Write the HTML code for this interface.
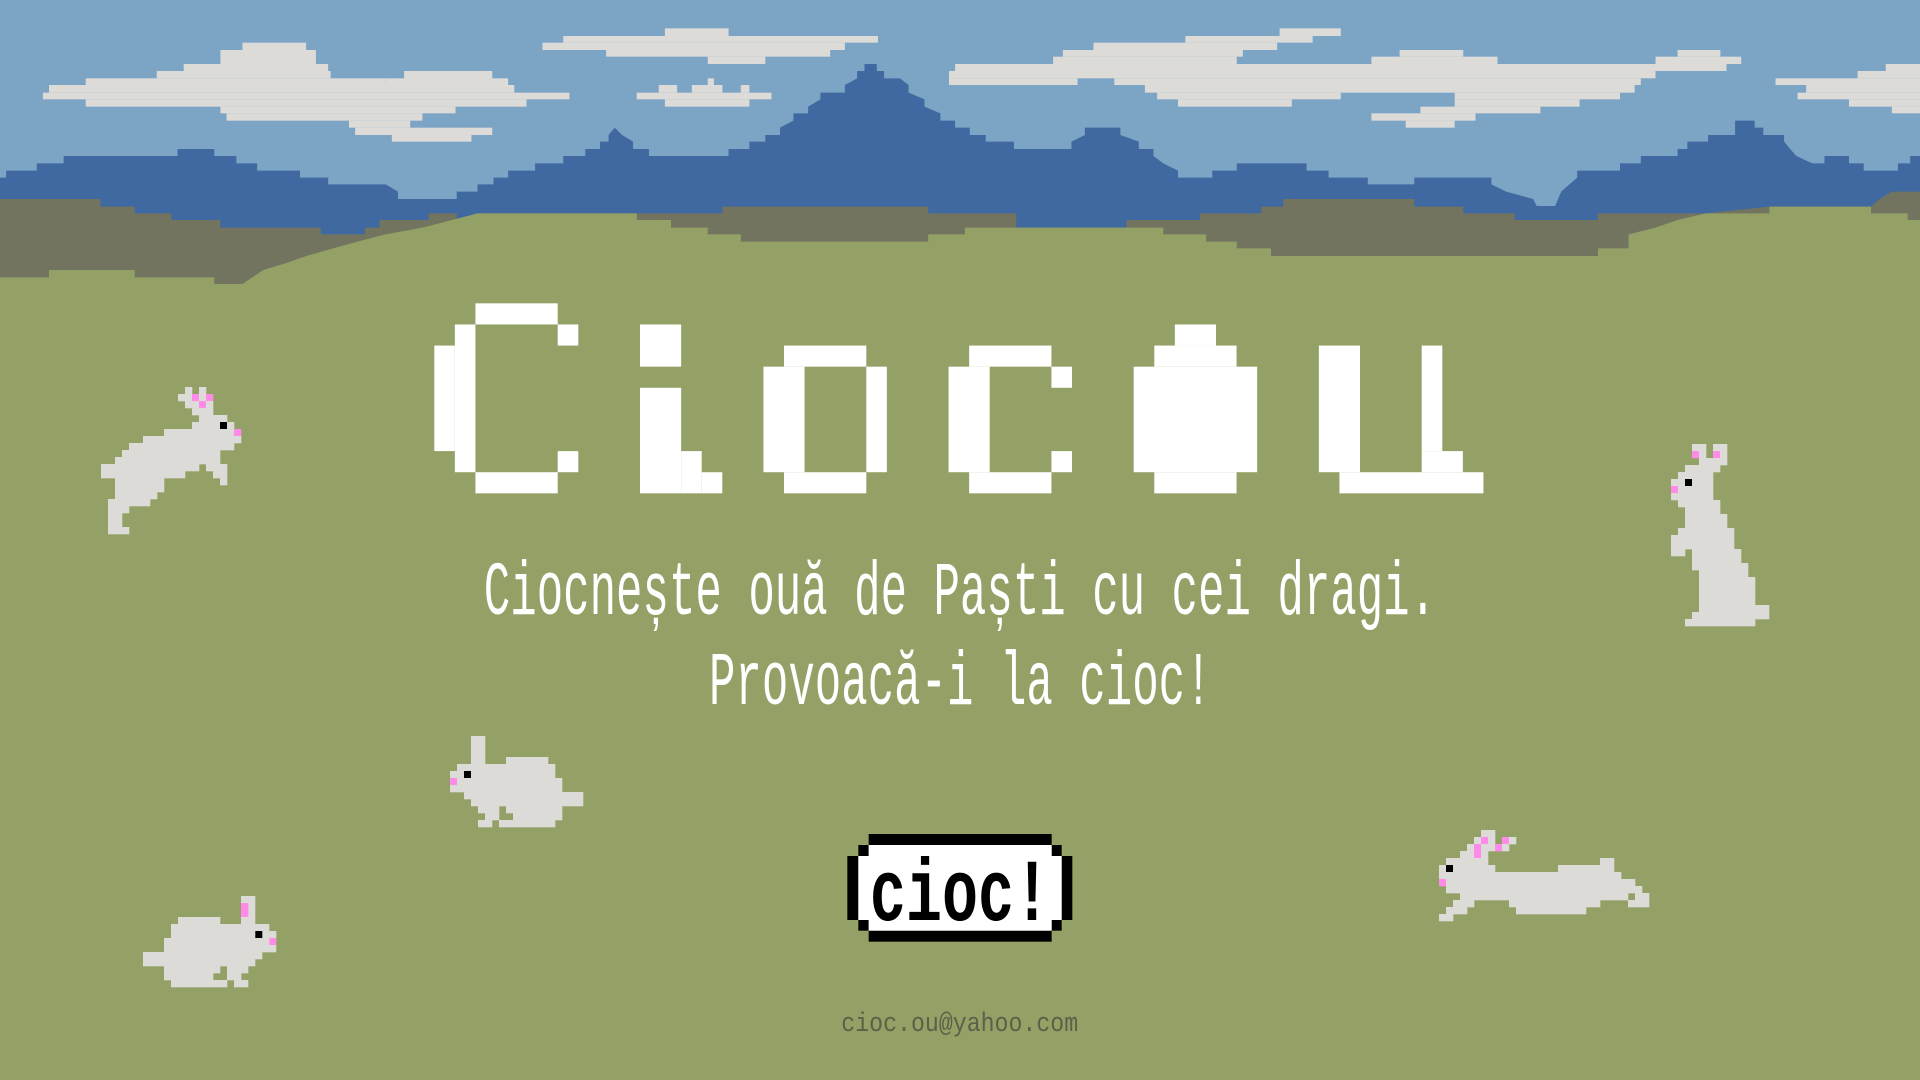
<!DOCTYPE html>
<html><head><meta charset="utf-8">
<style>
html,body{margin:0;padding:0;}
body{width:1920px;height:1080px;overflow:hidden;background:#93a066;position:relative;font-family:"Liberation Mono",monospace;}
svg{position:absolute;display:block;}
.line{position:absolute;left:0;width:1920px;text-align:center;color:#fff;font-size:76px;line-height:1;white-space:nowrap;}
.line span{display:inline-block;transform:scaleX(0.58);transform-origin:center;}
.mail{position:absolute;left:0;width:1920px;text-align:center;color:#5b6147;font-size:27px;}
.mail span{display:inline-block;transform:scaleX(0.86);}
</style></head><body>
<svg width="1920" height="300" viewBox="0 0 1568 900" preserveAspectRatio="none" style="left:0;top:0">
<rect x="0" y="0" width="1568" height="900" fill="#7ba4c5"/>
<g fill="#dcdbd8">
<rect x="198" y="128" width="52" height="22"/><rect x="180" y="150" width="78" height="42"/><rect x="150" y="192" width="118" height="21"/><rect x="128" y="213" width="142" height="22"/><rect x="70" y="235" width="245" height="20"/><rect x="330" y="213" width="72" height="42"/><rect x="315" y="235" width="100" height="20"/><rect x="40" y="255" width="380" height="23"/><rect x="35" y="278" width="430" height="20"/><rect x="70" y="298" width="360" height="22"/><rect x="180" y="320" width="192" height="20"/><rect x="185" y="340" width="160" height="22"/><rect x="285" y="362" width="50" height="21"/><rect x="290" y="383" width="112" height="22"/><rect x="320" y="405" width="65" height="20"/>
<rect x="543" y="85" width="52" height="23"/><rect x="460" y="108" width="257" height="20"/><rect x="443" y="128" width="247" height="22"/><rect x="495" y="150" width="183" height="20"/><rect x="578" y="170" width="47" height="22"/>
<rect x="578" y="235" width="5" height="20"/><rect x="538" y="255" width="15" height="23"/><rect x="565" y="255" width="25" height="23"/><rect x="605" y="255" width="7" height="23"/><rect x="520" y="278" width="110" height="20"/><rect x="543" y="298" width="69" height="22"/>
<rect x="1045" y="85" width="50" height="23"/><rect x="968" y="108" width="104" height="20"/><rect x="893" y="128" width="150" height="22"/><rect x="868" y="150" width="147" height="20"/><rect x="860" y="170" width="150" height="22"/><rect x="1143" y="150" width="52" height="20"/><rect x="1120" y="170" width="103" height="22"/><rect x="1370" y="150" width="35" height="20"/><rect x="1352" y="170" width="70" height="22"/><rect x="780" y="192" width="630" height="21"/><rect x="775" y="213" width="577" height="22"/><rect x="775" y="235" width="105" height="20"/><rect x="910" y="235" width="430" height="20"/><rect x="935" y="255" width="400" height="23"/><rect x="945" y="278" width="150" height="20"/><rect x="1188" y="278" width="135" height="20"/><rect x="962" y="298" width="93" height="22"/><rect x="1188" y="298" width="102" height="22"/><rect x="1160" y="320" width="98" height="20"/><rect x="1120" y="340" width="85" height="22"/><rect x="1148" y="362" width="40" height="21"/>
<rect x="1540" y="192" width="28" height="21"/><rect x="1517" y="213" width="51" height="22"/><rect x="1450" y="235" width="118" height="20"/><rect x="1475" y="255" width="93" height="23"/><rect x="1468" y="278" width="100" height="20"/><rect x="1510" y="298" width="58" height="22"/><rect x="1545" y="320" width="23" height="20"/>
</g>
<polygon fill="#3f69a0" points="0,533 5,533 5,512 30,512 30,490 52,490 52,468 145,468 145,447 175,447 175,468 193,468 193,490 210,490 210,512 245,512 245,533 268,533 268,553 315,553 325,575 325,597 373,597 373,575 390,575 390,553 403,553 403,533 415,533 415,512 437,512 437,490 460,490 460,468 478,468 478,447 490,447 490,425 497,425 497,405 502,383 508,405 517,425 517,447 530,447 530,468 595,468 595,447 612,447 612,425 625,425 625,405 637,405 637,383 648,362 648,340 660,340 660,320 670,298 670,278 690,278 690,255 700,235 700,213 706,213 706,192 716,192 716,213 722,213 722,235 735,235 742,255 742,278 755,298 755,320 768,340 768,362 780,362 780,383 792,383 792,405 805,405 805,425 828,425 828,447 875,447 875,425 886,405 886,383 915,383 915,405 930,425 930,447 942,447 942,468 950,490 962,512 962,533 990,533 990,512 1010,512 1010,490 1067,490 1067,512 1085,512 1085,533 1117,533 1117,553 1155,553 1155,533 1218,533 1218,553 1230,575 1252,597 1255,618 1270,618 1275,575 1288,533 1288,512 1323,512 1323,490 1340,490 1340,468 1370,468 1370,447 1378,447 1378,425 1395,425 1395,405 1417,405 1417,362 1433,362 1433,383 1440,383 1440,405 1457,405 1457,425 1462,447 1467,468 1480,490 1490,490 1490,468 1510,468 1510,490 1522,490 1522,512 1550,512 1550,490 1560,490 1560,468 1568,468 1568,900 0,900"/>
<polygon fill="#72745f" points="0,597 82,597 82,620 110,620 110,640 140,640 140,660 180,660 180,683 262,683 262,703 298,703 298,683 310,683 310,660 350,660 350,640 373,640 373,660 390,660 390,640 520,640 525,640 590,640 590,620 758,620 758,640 830,640 830,660 830,683 920,683 920,660 980,660 980,640 1030,640 1030,620 1048,620 1048,597 1155,597 1155,620 1195,620 1195,640 1237,640 1237,660 1305,660 1305,640 1393,640 1445,620 1528,620 1535,597 1545,575 1568,575 1568,900 0,900"/>
<polygon fill="#93a066" points="0,832 40,832 40,810 110,810 110,832 175,832 175,852 198,852 215,810 233,790 250,768 272,745 292,725 315,703 345,683 390,640 520,640 520,660 548,660 548,683 578,683 578,703 605,703 605,725 758,725 758,703 788,703 788,683 950,683 950,703 985,703 985,725 1010,725 1010,745 1038,745 1038,768 1305,768 1305,745 1330,745 1330,703 1352,683 1370,660 1393,640 1445,640 1445,620 1528,620 1528,640 1558,640 1558,660 1568,660 1568,900 0,900"/>
</svg>

<svg id="title" width="1120" height="440" viewBox="0 0 1568 1320" preserveAspectRatio="none" style="left:400px;top:280px"></svg>

<div class="line" style="top:556px"><span>Ciocnește ouă de Paști cu cei dragi.</span></div>
<div class="line" style="top:646px"><span>Provoacă-i la cioc!</span></div>

<svg width="280" height="220" viewBox="0 0 840 660" style="left:820px;top:820px">
<g fill="#000">
<rect x="146" y="42" width="549" height="33"/><rect x="115" y="75" width="31" height="33"/><rect x="695" y="75" width="30" height="33"/><rect x="82" y="108" width="33" height="192"/><rect x="725" y="108" width="32" height="192"/><rect x="115" y="300" width="31" height="32"/><rect x="695" y="300" width="30" height="32"/><rect x="146" y="332" width="549" height="33"/>
</g>
<g fill="#fff"><rect x="146" y="75" width="549" height="257"/><rect x="115" y="108" width="610" height="192"/></g>
<text x="420" y="300" text-anchor="middle" font-family="Liberation Mono, monospace" font-weight="bold" font-size="265" fill="#000" transform="translate(420 0) scale(0.68 1) translate(-420 0)">cioc!</text>
</svg>

<div class="mail" style="top:1010px"><span>cioc.ou@yahoo.com</span></div>

<svg id="bunnies" width="1920" height="1080" style="left:0;top:0"></svg>

<script>
(function(){
var ns="http://www.w3.org/2000/svg";
var t=document.getElementById('title');
var R=[[2,0,4,1],[1,1,1,7],[0,2,1,5],[6,1,1,1],[6,7,1,1],[2,8,4,1],
[10,1,2,2],[10,4,2,5],[12,7,1,2],[13,8,1,1],
[17,2,4,1],[16,3,2,5],[21,3,1,5],[17,8,4,1],
[26,2,4,1],[25,3,2,5],[30,3,1,1],[30,7,1,1],[26,8,4,1],
[36,1,2,1],[35,2,4,1],[34,3,6,5],[35,8,4,1],
[43,2,2,6],[48,2,1,5],[48,7,2,1],[44,8,7,1]];
R.forEach(function(r){var e=document.createElementNS(ns,'rect');
var x0=48+r[0]*28.8,y0=70+r[1]*63.33;
e.setAttribute('x',x0);e.setAttribute('y',y0);e.setAttribute('width',r[2]*28.8);e.setAttribute('height',r[3]*63.33);e.setAttribute('fill','#fff');t.appendChild(e);});
var b=document.getElementById('bunnies');
var C={w:'#dcdbd8',k:'#000',p:'#ff8be8'};
function draw(map,ox,oy,u,mir){var W=0;map.forEach(function(s){W=Math.max(W,s.length)});
map.forEach(function(s,r){for(var c=0;c<s.length;c++){var ch=s[c];if(!C[ch])continue;
var cc=mir?(W-1-c):c;var e=document.createElementNS(ns,'rect');
e.setAttribute('x',ox+cc*u);e.setAttribute('y',oy+r*u);e.setAttribute('width',u+0.3);e.setAttribute('height',u+0.3);e.setAttribute('fill',C[ch]);b.appendChild(e);}});}
var sit=["...ww..............","...ww..............","...ww..............","...ww...wwwwww.....",".wwwwwwwwwwwwww....","wwkwwwwwwwwwwww....","pwwwwwwwwwwwwwww...","wwwwwwwwwwwwwwww...","..wwwwwwwwwwwwwwwww","...wwwwwwwwwwwwwwww","....www.wwwwwwww...",".....ww..wwwwwww...","....ww.wwwwwwww...."];
var sit2=["...ww..............","...wp..............","...wp..............","...ww...wwwwww.....",".wwwwwwwwwwwwww....","wwkwwwwwwwwwwww....","pwwwwwwwwwwwwwww...","wwwwwwwwwwwwwwww...","..wwwwwwwwwwwwwwwww","...wwwwwwwwwwwwwwww","....www.wwwwwwww...",".....ww..wwwwwww...","....ww.wwwwwwww...."];
var stand=["...ww.ww......","...pw.pw......","....wwww......","..wwwww.......",".wwwww........","wwkwww........","pwwwww........","wwwwww........",".wwwwww.......","..wwwww.......","..wwwwww......","..wwwwww......",".wwwwwwww.....","wwwwwwwww.....","wwwwwwwww.....","ww.wwwwwww....","...wwwwwww....","...wwwwwwww...","....wwwwwww...","....wwwwwwww..","....wwwwwwww..","....wwwwwwww..","....wwwwwwww..","....wwwwwwwwww","...wwwwwwwwwww","..wwwwwwwwww.."];
var jump=["............w.w.....","...........wwpwp....","............wwpw....",".............www....","..............wwww..",".............wwwwkw.",".........wwwwwwwwwwp","......wwwwwwwwwwwwww","....wwwwwwwwwwwwwww.","...wwwwwwwwwwwwww...","..wwwwwwwwwwwwwww...","wwwwwwwwwwwwww.www..","wwwwwwwwwwww....ww..","..wwwwwww........w..","..wwwwwww...........","..wwwwww............",".wwwwww.............",".www................",".ww.................",".ww.................",".www................"];
var leap=["......ww.......................",".....wpw.pw....................","....wpwwpw.....................","...wwpw........................",".wwwwww................ww......","wkwwwwww.........wwwwwwww......","wwwwwwwwwwwwwwwwwwwwwwwwww.....","pwwwwwwwwwwwwwwwwwwwwwwwwwww...",".wwwwwwwwwwwwwwwwwwwwwwwwwwww..","...wwwwwwwwwwwwwwwwwwwwwwww.ww.","..www.....wwwwwwwwwwwww....www.",".www.......wwwwwwwwww..........","ww............................."];
draw(jump,101,387,7,false);
draw(stand,1671,444,7,false);
draw(sit,450,736,7,false);
draw(sit2,143,896,7,true);
draw(leap,1439,830,7,false);
})();
</script>
</body></html>
